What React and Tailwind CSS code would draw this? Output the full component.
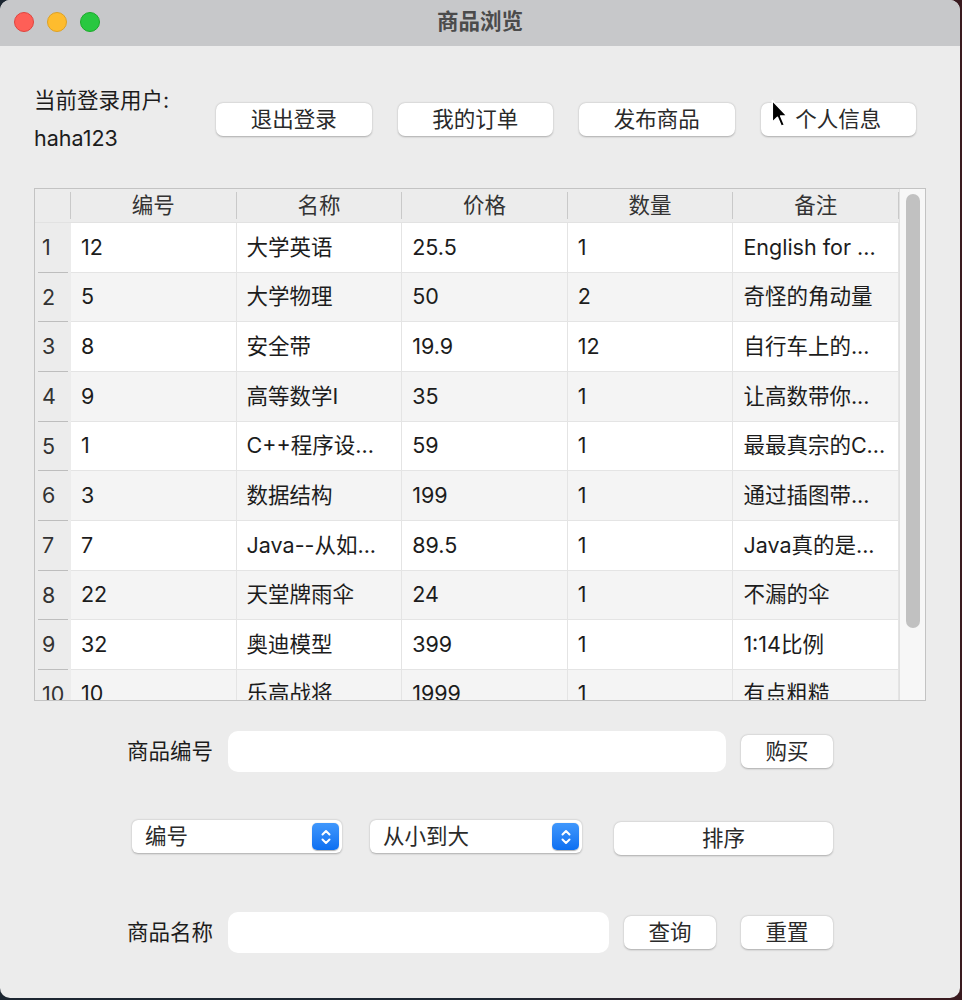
import React from "react";

const rows = [
  ["12", "大学英语", "25.5", "1", "English for ..."],
  ["5", "大学物理", "50", "2", "奇怪的角动量"],
  ["8", "安全带", "19.9", "12", "自行车上的..."],
  ["9", "高等数学I", "35", "1", "让高数带你..."],
  ["1", "C++程序设...", "59", "1", "最最真宗的C..."],
  ["3", "数据结构", "199", "1", "通过插图带..."],
  ["7", "Java--从如...", "89.5", "1", "Java真的是..."],
  ["22", "天堂牌雨伞", "24", "1", "不漏的伞"],
  ["32", "奥迪模型", "399", "1", "1:14比例"],
  ["10", "乐高战将", "1999", "1", "有点粗糙"],
];

const headers = ["编号", "名称", "价格", "数量", "备注"];

function Btn({ children, className = "" }) {
  return (
    <button
      className={
        "flex items-center justify-center h-[33px] bg-white rounded-[7px] text-[21.5px] leading-none text-[#2a2a2a] shadow-[0_0.5px_2px_rgba(0,0,0,0.28)] " +
        className
      }
    >
      {children}
    </button>
  );
}

function Stepper() {
  return (
    <div className="flex items-center justify-center w-[27px] h-[27px] rounded-[5px] bg-gradient-to-b from-[#3f97fc] to-[#0b6ff1] shadow-[0_0.5px_1px_rgba(0,0,0,0.3)]">
      <svg width="12" height="18" viewBox="0 0 12 18" fill="none">
        <path d="M2.5 6.5 L6 3 L9.5 6.5" stroke="white" strokeWidth="2" strokeLinecap="round" strokeLinejoin="round" />
        <path d="M2.5 11.5 L6 15 L9.5 11.5" stroke="white" strokeWidth="2" strokeLinecap="round" strokeLinejoin="round" />
      </svg>
    </div>
  );
}

function Select({ label, className = "" }) {
  return (
    <div
      className={
        "flex items-center justify-between h-[33px] bg-white rounded-[6px] pl-[13px] pr-[3px] shadow-[0_0.5px_2px_rgba(0,0,0,0.28)] " +
        className
      }
    >
      <span className="text-[21.5px] leading-none text-[#2a2a2a]">{label}</span>
      <Stepper />
    </div>
  );
}

export default function App() {
  return (
    <div className="w-[962px] h-[1000px] bg-gradient-to-r from-[#1c2631] via-[#1d2733] to-[#3a1a1f] font-['Inter','Noto_Sans_CJK_SC',sans-serif]">
      <div className="relative w-[960px] h-[998px] rounded-[10px] overflow-hidden bg-[#ececec] flex flex-col">
        {/* Title bar */}
        <div className="relative h-[46px] bg-[#c7c8ca] flex items-center justify-center shrink-0">
          <div className="absolute left-[14px] top-[12px] flex gap-[13px]">
            <div className="w-[20px] h-[20px] rounded-full bg-[#fe5f57] border border-[#e0443e]" />
            <div className="w-[20px] h-[20px] rounded-full bg-[#febc2e] border border-[#dea123]" />
            <div className="w-[20px] h-[20px] rounded-full bg-[#28c840] border border-[#1aab29]" />
          </div>
          <span className="text-[21.5px] font-semibold text-[#4b4b4b] leading-none mt-[-3px]">商品浏览</span>
        </div>

        {/* Top section */}
        <div className="flex pl-[34px] pt-[35px]">
          <div className="w-[182px] text-[21.5px] text-[#1c1c1c]">
            <div className="h-[38px] leading-[38px]">当前登录用户:</div>
            <div className="h-[38px] leading-[38px]">haha123</div>
          </div>
          <div className="flex gap-[26px] mt-[22px]">
            <Btn className="w-[155.5px]">退出登录</Btn>
            <Btn className="w-[155.5px]">我的订单</Btn>
            <Btn className="w-[155.5px]">发布商品</Btn>
            <Btn className="w-[155.5px]">个人信息</Btn>
          </div>
        </div>

        {/* Table */}
        <div className="ml-[34px] mt-[31px] w-[892px] h-[513px] border border-[#c3c3c3] flex overflow-hidden">
          <div className="flex-1 flex flex-col overflow-hidden">
            <div className="h-[34px] shrink-0 flex bg-[#ececec] border-b border-[#e2e2e2]">
              <div className="w-[36px] shrink-0 flex items-center justify-end">
                <div className="w-px h-[27px] bg-[#c9c9c9]" />
              </div>
              {headers.map((h) => (
                <div key={h} className="flex-1 flex items-center">
                  <div className="flex-1 text-center text-[21.5px] leading-none text-[#333]">{h}</div>
                  <div className="w-px h-[27px] bg-[#c9c9c9]" />
                </div>
              ))}
            </div>
            {rows.map((r, i) => (
              <div
                key={i}
                className={
                  "h-[49.67px] shrink-0 flex " + (i % 2 === 0 ? "bg-white" : "bg-[#f4f4f4]")
                }
              >
                <div className="relative w-[36px] shrink-0 bg-[#ececec] flex items-center pl-[7px] text-[21.5px] leading-none text-[#333]">
                  {i + 1}
                  <div className="absolute left-[3px] right-[3px] bottom-0 h-px bg-[#bdbdbd]" />
                </div>
                {r.map((c, j) => (
                  <div
                    key={j}
                    className="flex-1 flex items-center pl-[10px] border-r border-b border-[#e4e4e4] text-[21.5px] leading-none text-[#1c1c1c] whitespace-nowrap overflow-hidden"
                  >
                    {c}
                  </div>
                ))}
              </div>
            ))}
          </div>
          <div className="w-[26px] shrink-0 bg-[#f7f7f7] border-l border-[#e0e0e0] pl-[6px] pt-[5px]">
            <div className="w-[14px] h-[434px] rounded-full bg-[#c1c1c1]" />
          </div>
        </div>

        {/* 商品编号 row */}
        <div className="flex items-center pl-[127px] mt-[30px]">
          <span className="text-[21.5px] leading-none text-[#1c1c1c]">商品编号</span>
          <div className="ml-[15px] w-[498px] h-[41px] rounded-[10px] bg-white" />
          <Btn className="ml-[15px] w-[92px]">购买</Btn>
        </div>

        {/* sort row */}
        <div className="flex items-start pl-[132px] mt-[48px]">
          <Select label="编号" className="w-[210px]" />
          <Select label="从小到大" className="ml-[28px] w-[212px]" />
          <Btn className="ml-[32px] mt-[2px] w-[219px]">排序</Btn>
        </div>

        {/* 商品名称 row */}
        <div className="flex items-center pl-[127px] mt-[57px]">
          <span className="text-[21.5px] leading-none text-[#1c1c1c]">商品名称</span>
          <div className="ml-[15px] w-[381px] h-[41px] rounded-[10px] bg-white" />
          <Btn className="ml-[15px] w-[92px]">查询</Btn>
          <Btn className="ml-[25px] w-[92px]">重置</Btn>
        </div>

        {/* mouse cursor */}
        <svg className="absolute left-[771px] top-[99px]" width="18" height="30" viewBox="0 0 14 23">
          <path
            d="M1 1 L1 18 L5 14 L8 21 L10.5 20 L7.5 13 L12.5 13 Z"
            fill="black"
            stroke="white"
            strokeWidth="1.2"
            strokeLinejoin="round"
          />
        </svg>
      </div>
    </div>
  );
}
